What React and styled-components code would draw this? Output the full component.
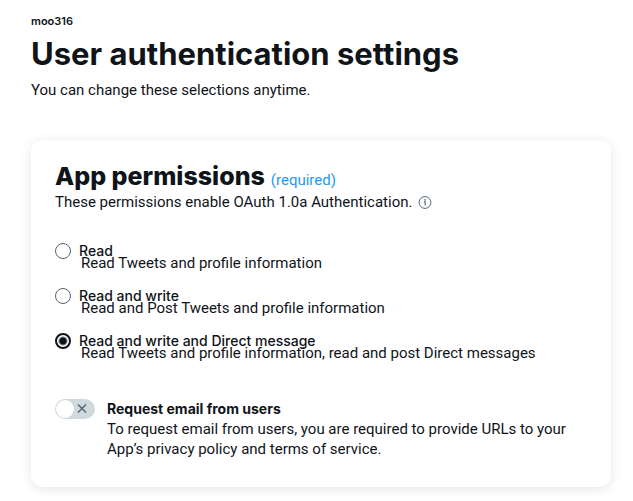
import React, { useState } from 'react'
import styled, { createGlobalStyle } from 'styled-components'

const permissions = [
    {
        id: 'read',
        title: 'Read',
        detail: 'Read Tweets and profile information',
    },
    {
        id: 'read-write',
        title: 'Read and write',
        detail: 'Read and Post Tweets and profile information',
    },
    {
        id: 'read-write-dm',
        title: 'Read and write and Direct message',
        detail: 'Read Tweets and profile information, read and post Direct messages',
    },
]

export default function App() {
    const [permission, setPermission] = useState('read-write-dm')
    const [requestEmail, setRequestEmail] = useState(false)

    return (
        <>
            <GlobalStyle />
            <Page>
                <AppName>moo316</AppName>
                <Title>User authentication settings</Title>
                <Text>You can change these selections anytime.</Text>

                <Card>
                    <CardHeader>
                        <CardTitle>App permissions</CardTitle>
                        <Required>(required)</Required>
                    </CardHeader>
                    <Description>
                        These permissions enable OAuth 1.0a Authentication.
                        <InfoButton type="button" aria-label="About OAuth 1.0a">
                            <svg viewBox="0 0 14 14" width="14" height="14" fill="none" stroke="currentColor">
                                <circle cx="7" cy="7.5" r="5.9" />
                                <path d="M6 6.9H7.2V10.4" strokeWidth="1.1" />
                                <circle cx="7" cy="4.9" r="0.8" fill="currentColor" stroke="none" />
                            </svg>
                        </InfoButton>
                    </Description>

                    <Options role="radiogroup" aria-label="App permissions">
                        {permissions.map((item) => (
                            <Option key={item.id}>
                                <Radio
                                    type="radio"
                                    name="permission"
                                    id={item.id}
                                    checked={permission === item.id}
                                    onChange={() => setPermission(item.id)}
                                />
                                <OptionLabel htmlFor={item.id}>
                                    <OptionTitle>{item.title}</OptionTitle>
                                    <OptionDetail>{item.detail}</OptionDetail>
                                </OptionLabel>
                            </Option>
                        ))}
                    </Options>

                    <EmailRow>
                        <Switch
                            type="button"
                            role="switch"
                            id="request-email"
                            aria-checked={requestEmail}
                            aria-labelledby="request-email-label"
                            $on={requestEmail}
                            onClick={() => setRequestEmail(!requestEmail)}
                        >
                            <Knob />
                            <svg viewBox="0 0 10 10" width="10" height="10" fill="none" stroke="currentColor" strokeWidth="1.4">
                                {requestEmail ? <path d="M1 5.5L4 8.5L9 1.5" /> : <path d="M1 0.5L9 8.5M9 0.5L1 8.5" />}
                            </svg>
                        </Switch>
                        <div>
                            <EmailLabel htmlFor="request-email" id="request-email-label">Request email from users</EmailLabel>
                            <Text>
                                To request email from users, you are required to provide URLs to your App’s privacy policy and terms of service.
                            </Text>
                        </div>
                    </EmailRow>
                </Card>
            </Page>
        </>
    )
}

const GlobalStyle = createGlobalStyle`
  * {
    box-sizing: border-box;
  }
  body {
    margin: 0;
    background: #ffffff;
    color: #0f1419;
    font-family: Roboto, "Liberation Sans", sans-serif;
    font-size: 15px;
    line-height: 20px;
  }
  h1, h2, p {
    margin: 0;
  }
`;

const Page = styled.main`
  padding: 13px 22px 14px 31px;
`;

const AppName = styled.p`
  font-family: Inter, sans-serif;
  font-size: 11px;
  font-weight: 600;
  line-height: 16px;
`;

const Title = styled.h1`
  margin: 7px 0 8px;
  font-family: Inter, sans-serif;
  font-size: 31px;
  font-weight: 700;
  line-height: 36px;
`;

const Text = styled.p`
  font-size: 15px;
  line-height: 20px;
`;

const Card = styled.section`
  margin-top: 40px;
  padding: 20px 24px 28px;
  border-radius: 12px;
  box-shadow: 0 2px 12px rgba(0, 0, 0, 0.1);
`;

const CardHeader = styled.div`
  display: flex;
  align-items: baseline;
  gap: 6px;
`;

const CardTitle = styled.h2`
  font-family: Inter, sans-serif;
  font-size: 25px;
  font-weight: 800;
  line-height: 32px;
`;

const Required = styled.span`
  color: #1d9bf0;
`;

const Description = styled.p`
  display: flex;
  align-items: center;
  gap: 6px;
`;

const InfoButton = styled.button`
  display: flex;
  padding: 0;
  border: 0;
  background: none;
  color: #536471;
  cursor: pointer;
`;

const Options = styled.div`
  display: grid;
  gap: 13px;
  margin-top: 29px;
`;

const Option = styled.div`
  display: flex;
  align-items: flex-start;
  gap: 8px;
`;

const Radio = styled.input`
  appearance: none;
  flex: none;
  width: 16px;
  height: 16px;
  margin: 2px 0;
  border: 1px solid #536471;
  border-radius: 50%;
  background: #ffffff;
  cursor: pointer;
  &:checked {
    border: 2px solid #0f1419;
    background: radial-gradient(circle, #0f1419 3px, #ffffff 5px);
  }
`;

const OptionLabel = styled.label`
  display: grid;
  grid-template-rows: 12px 20px;
  cursor: pointer;
`;

const OptionTitle = styled.span`
  font-family: Inter, sans-serif;
  font-size: 14px;
  font-weight: 500;
`;

const OptionDetail = styled.span`
  padding-left: 2px;
`;

const EmailRow = styled.div`
  display: flex;
  align-items: flex-start;
  gap: 12px;
  margin-top: 36px;
`;

const Switch = styled.button`
  display: flex;
  flex: none;
  flex-direction: ${({ $on }) => ($on ? 'row-reverse' : 'row')};
  align-items: center;
  justify-content: space-between;
  width: 40px;
  height: 20px;
  padding: ${({ $on }) => ($on ? '0 1px 0 8px' : '0 8px 0 1px')};
  border: 0;
  border-radius: 10px;
  background: ${({ $on }) => ($on ? '#1d9bf0' : '#cfd9de')};
  color: ${({ $on }) => ($on ? '#ffffff' : '#536471')};
  cursor: pointer;
`;

const Knob = styled.span`
  width: 18px;
  height: 18px;
  border-radius: 50%;
  background: #ffffff;
`;

const EmailLabel = styled.label`
  display: block;
  font-family: Inter, sans-serif;
  font-size: 14px;
  font-weight: 700;
  cursor: pointer;
`;
